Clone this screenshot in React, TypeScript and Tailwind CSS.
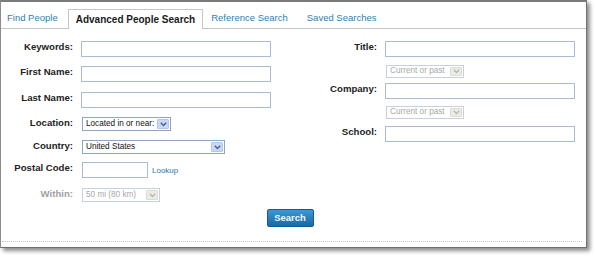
import { clsx as cn } from "clsx"

function Field({ className }: { className?: string }) {
  return <input type="text" className={cn("block h-[16px] border border-[#a9bcd3] bg-white outline-none", className)} />
}

interface SelectProps {
  text: string
  className: string
  disabled?: boolean
}

function FakeSelect({ text, className, disabled }: SelectProps) {
  return (
    <div
      className={cn(
        "flex items-stretch border bg-white",
        disabled ? "border-[#c7d0db]" : "border-[#8ea6c4]",
        className
      )}
    >
      <span
        className={cn(
          "flex-1 flex items-center pl-[3px] text-[8.2px] leading-none whitespace-nowrap overflow-hidden",
          disabled ? "text-[#a8a8a8]" : "text-[#111]"
        )}
      >
        {text}
      </span>
      <span
        className={cn(
          "w-[12px] m-px flex items-center justify-center rounded-[1px] border",
          disabled ? "bg-[#ecece6] border-[#dcdcd4]" : "bg-[#c9d8f8] border-[#b3c6ee]"
        )}
      >
        <svg width="7" height="5" viewBox="0 0 7 5">
          <path d="M0.8 0.8L3.5 3.6L6.2 0.8" stroke={disabled ? "#b8b8b0" : "#4a5f8a"} strokeWidth="1.4" fill="none" />
        </svg>
      </span>
    </div>
  )
}

function Label({ children, className, muted }: { children: string; className: string; muted?: boolean }) {
  return (
    <span
      className={cn(
        "text-right text-[9.6px] leading-[12px] font-bold",
        muted ? "text-[#a0a0a0]" : "text-[#222]",
        className
      )}
    >
      {children}
    </span>
  )
}

export default function App() {
  return (
    <div className="w-[596px] h-[258px] bg-white font-['Liberation_Sans',Arial,sans-serif]">
      <div className="w-[587px] h-[248px] flex flex-col bg-white border-t-2 border-t-[#7a7a7a] border-l border-l-[#8c8c8c] border-r border-r-[#707070] border-b border-b-[#707070] shadow-[3px_3px_4px_rgba(0,0,0,0.45)]">
        {/* tabs */}
        <div className="flex items-end h-[27px] border-b border-[#c6c6c6]">
          <span className="ml-[6px] mb-[4px] text-[9.5px] leading-[12px] text-[#2f7fb6]">Find People</span>
          <span className="ml-[10px] -mb-px h-[20px] px-[7px] flex items-center bg-white border border-b-0 border-[#c6c6c6] text-[10px] font-bold text-[#1a1a1a]">
            Advanced People Search
          </span>
          <span className="ml-[8px] mb-[4px] text-[9.5px] leading-[12px] text-[#2f7fb6]">Reference Search</span>
          <span className="ml-[19px] mb-[4px] text-[9.5px] leading-[12px] text-[#2f7fb6]">Saved Searches</span>
        </div>

        {/* form */}
        <div className="flex">
          <div className="w-[300px] flex flex-col">
            <div className="flex items-start gap-[8px] mt-[12px]">
              <Label className="w-[72px]">Keywords:</Label>
              <Field className="w-[190px]" />
            </div>
            <div className="flex items-start gap-[8px] mt-[9px]">
              <Label className="w-[72px]">First Name:</Label>
              <Field className="w-[190px]" />
            </div>
            <div className="flex items-start gap-[8px] mt-[10px]">
              <Label className="w-[72px]">Last Name:</Label>
              <Field className="w-[190px]" />
            </div>
            <div className="flex items-start gap-[9px] mt-[9px]">
              <Label className="w-[72px]">Location:</Label>
              <FakeSelect text="Located in or near:" className="w-[89px] h-[14px]" />
            </div>
            <div className="flex items-start gap-[9px] mt-[9px]">
              <Label className="w-[72px]">Country:</Label>
              <FakeSelect text="United States" className="w-[143px] h-[14px]" />
            </div>
            <div className="flex items-start gap-[9px] mt-[8px]">
              <Label className="w-[72px]">Postal Code:</Label>
              <Field className="w-[66px]" />
              <span className="-ml-[5px] mt-[4px] text-[8px] leading-[10px] text-[#2a79b0]">Lookup</span>
            </div>
            <div className="flex items-start gap-[9px] mt-[10px]">
              <Label className="w-[72px]" muted>Within:</Label>
              <FakeSelect text="50 mi (80 km)" className="w-[78px] h-[14px]" disabled />
            </div>
          </div>

          <div className="flex-1 flex flex-col">
            <div className="flex items-start gap-[8px] mt-[12px]">
              <Label className="w-[76px]">Title:</Label>
              <Field className="w-[190px]" />
            </div>
            <div className="ml-[85px] mt-[8px]">
              <FakeSelect text="Current or past" className="w-[78px] h-[13px]" disabled />
            </div>
            <div className="flex items-start gap-[8px] mt-[5px]">
              <Label className="w-[76px]">Company:</Label>
              <Field className="w-[190px]" />
            </div>
            <div className="ml-[85px] mt-[7px]">
              <FakeSelect text="Current or past" className="w-[78px] h-[13px]" disabled />
            </div>
            <div className="flex items-start gap-[8px] mt-[7px]">
              <Label className="w-[76px]">School:</Label>
              <Field className="w-[190px]" />
            </div>
          </div>
        </div>

        <div className="flex justify-center pr-[7px] mt-[7px]">
          <button className="w-[47px] h-[18px] rounded-[2px] border border-[#0f5d92] bg-linear-to-b from-[#3d97d3] to-[#176aa5] text-[#f2f8fc] text-[9.5px] font-semibold leading-none">
            Search
          </button>
        </div>

        <div className="mx-[1px] mr-[4px] mt-[14px] border-t border-dotted border-[#c4c4c4]" />
      </div>
    </div>
  )
}
